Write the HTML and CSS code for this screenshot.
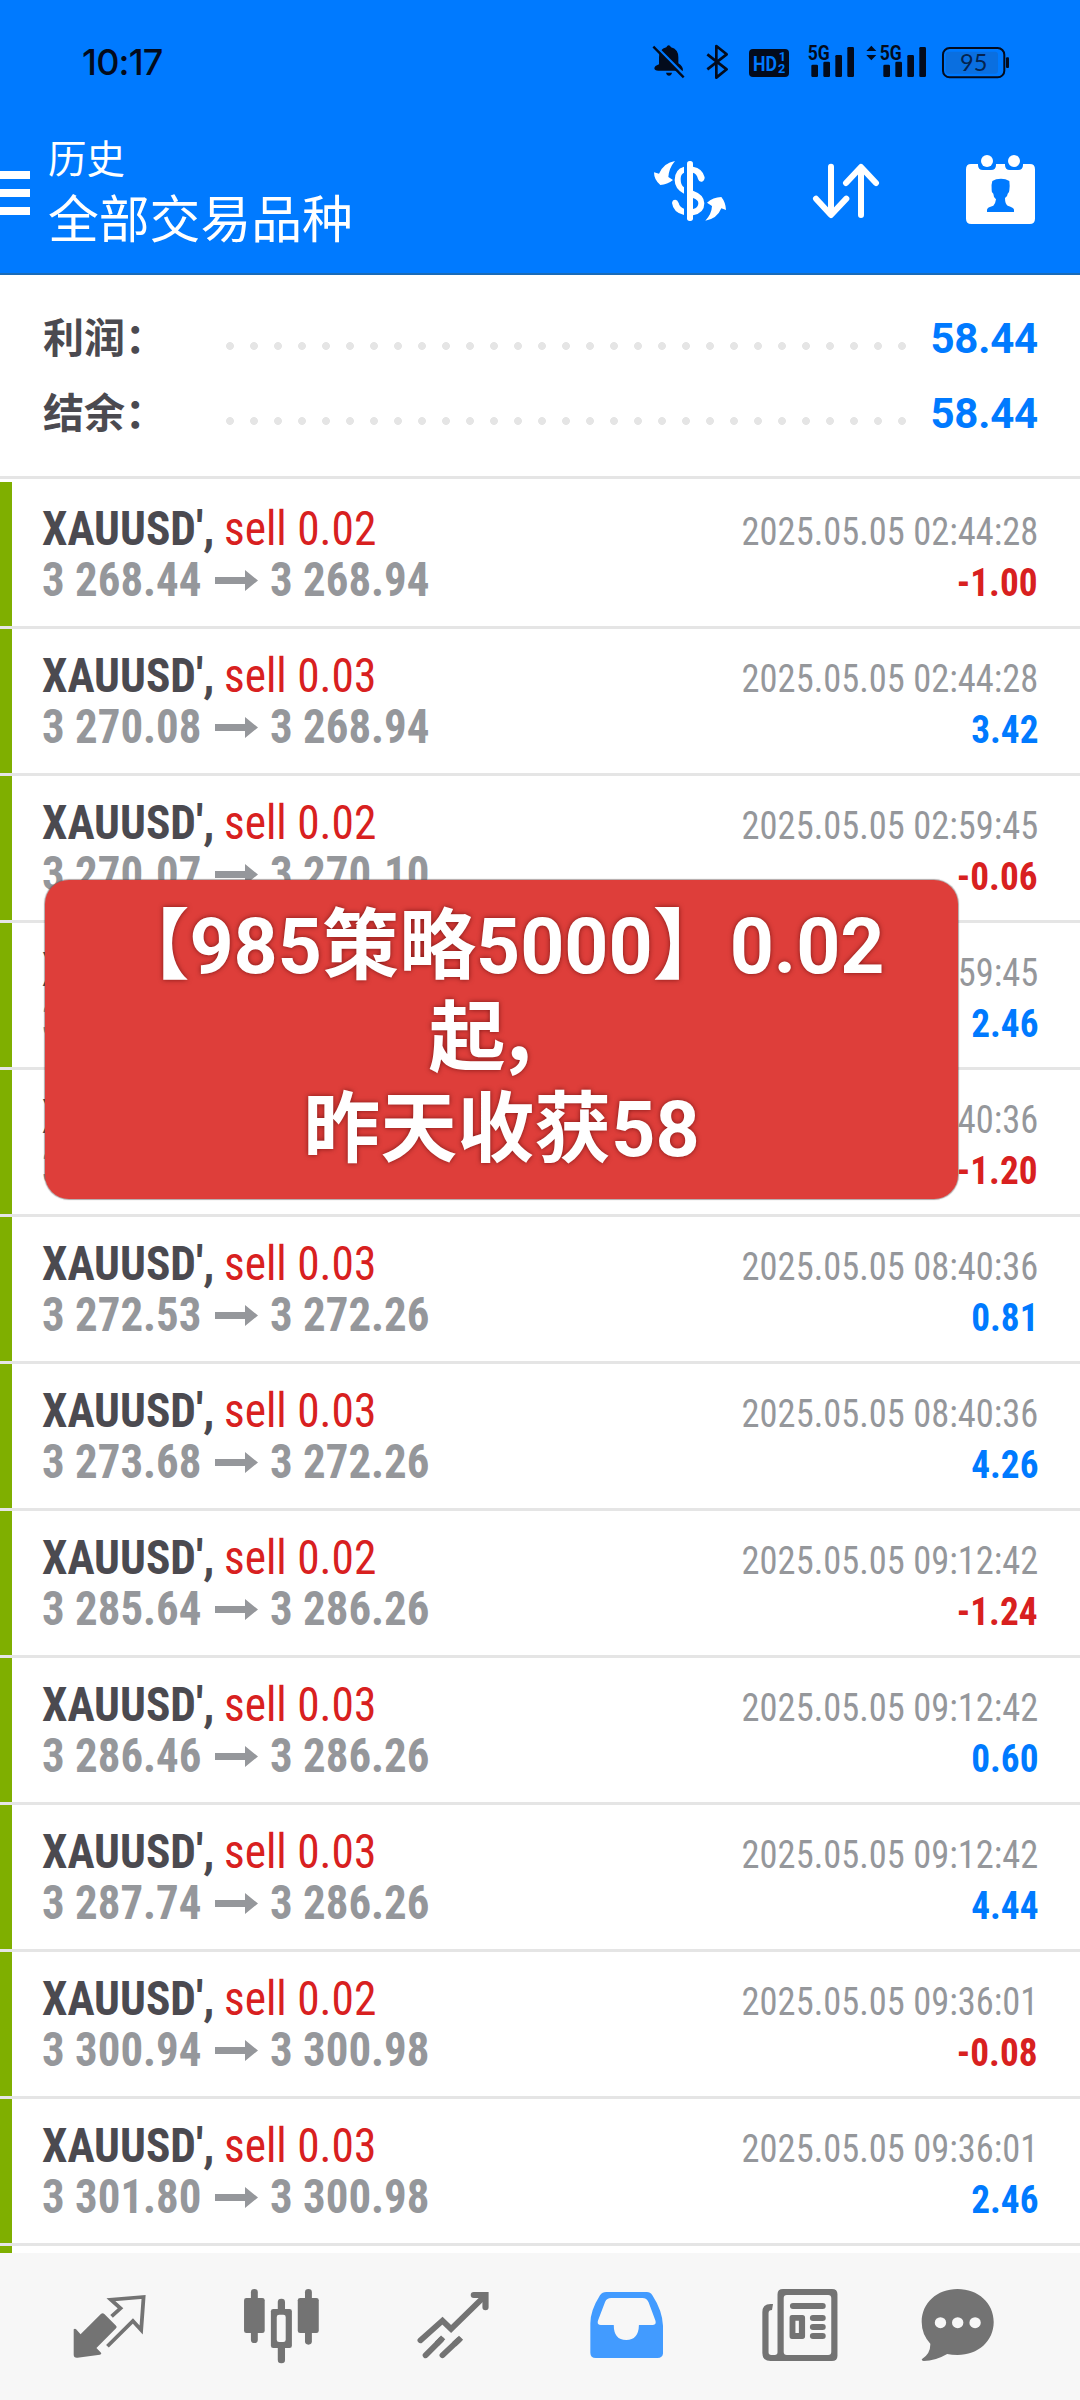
FILE: index.html
```html
<!DOCTYPE html>
<html lang="zh-CN">
<head>
<meta charset="utf-8">
<title>历史</title>
<link rel="stylesheet" href="styles.css">
</head>
<body>
<div class="screen">
  <header class="header">
    <div class="status">
      <span class="clock">10:17</span>
      <svg class="status-icons" viewBox="90 60 1090 130" fill="#030b1c">
        <path d="M115 152q-12 0-12-7 0-7 14-12V112q0-24 22-30 3-6 7-6t7 6q22 6 22 30v18q14 8 14 22H115Z"/>
        <path d="M138 158h18q-2 9-9 9t-9-9Z"/>
        <path d="M99 70 198 170" stroke="#007aff" stroke-width="8"/>
        <path d="M100 80 191 172" stroke="#030b1c" stroke-width="7"/>
        <path d="M262 103 320 148 289 173V78L320 103 262 148" fill="none" stroke="#030b1c" stroke-width="8" stroke-linejoin="round"/>
        <rect x="387" y="87" width="120" height="84" rx="12"/>
        <text class="hd" x="399" y="152" textLength="72" lengthAdjust="spacingAndGlyphs">HD</text>
        <text class="hd-num" x="476" y="124">1</text>
        <text class="hd-num" x="474" y="160">2</text>
        <text class="net" x="563" y="119" textLength="66" lengthAdjust="spacingAndGlyphs">5G</text>
        <rect x="574" y="134" width="20" height="37" rx="4"/>
        <rect x="610" y="125" width="20" height="46" rx="4"/>
        <rect x="646" y="105" width="20" height="66" rx="4"/>
        <rect x="682" y="81" width="20" height="90" rx="4"/>
        <path d="M739 93 754 77 769 93ZM739 105h30L754 121Z"/>
        <text class="net" x="779" y="119" textLength="66" lengthAdjust="spacingAndGlyphs">5G</text>
        <rect x="790" y="134" width="20" height="37" rx="4"/>
        <rect x="826" y="125" width="20" height="46" rx="4"/>
        <rect x="862" y="105" width="20" height="66" rx="4"/>
        <rect x="898" y="81" width="20" height="90" rx="4"/>
        <rect x="977" y="95" width="157" height="66" rx="9" fill="#0a6fe0"/>
        <rect x="969" y="84" width="184" height="88" rx="20" fill="none" stroke="#030b1c" stroke-width="6"/>
        <rect x="1158" y="112" width="9" height="32" rx="3"/>
        <text class="battery" x="1020" y="153" textLength="82" lengthAdjust="spacingAndGlyphs">95</text>
      </svg>
    </div>
    <div class="toolbar">
      <div class="menu"><i></i><i></i><i></i></div>
      <div class="titles">
        <div class="title">历史</div>
        <div class="subtitle">全部交易品种</div>
      </div>
      <svg class="tool tool-currency" viewBox="99 72 222 216" fill="#fff">
        <path d="M165 93Q132 98 117 131L102 127Q102 150 121 165 142 164 159 150L145 141Q147 114 165 93Z"/>
        <path d="M256 272Q275 252 276 228L261 218Q279 202 304 201 317 217 318 240L304 235Q291 267 256 272Z"/>
        <rect x="201" y="93" width="18" height="180" rx="8"/>
        <path d="M192 110v18q-10 4-10 19 0 19 10 25v19q-28-14-28-41 0-32 28-40Z"/>
        <path d="M219 110Q248 115 254 142 254 152 246 155 237 157 234 147 230 130 219 128Z"/>
        <path d="M219 182Q253 194 253 220 253 250 219 256V237Q235 234 235 220 235 209 219 204Z"/>
        <path d="M192 255Q160 248 156 219 157 209 166 209 172 209 176 219 179 232 192 236Z"/>
      </svg>
      <svg class="tool tool-sort" viewBox="576 72 204 216" fill="none" stroke="#fff" stroke-width="18" stroke-linecap="round" stroke-linejoin="round">
        <path d="M633 110V254M588 206 633 255 679 206M723 255V112M678 159 723 111 768 159"/>
      </svg>
      <svg class="tool tool-calendar" viewBox="1035 72 213 216" fill="#fff">
        <path d="M1053 102h21v3q0 15 15 15h24q15 0 15-15v-3h27v3q0 15 15 15h24q15 0 15-15v-3h21q15 0 15 16V266q0 16-16 16H1054q-16 0-16-16V118q0-16 15-16Z"/>
        <circle cx="1101" cy="93" r="18"/><circle cx="1182" cy="93" r="18"/>
        <path fill="#007aff" d="M1117 153q10-7 26-7 14 0 25 7 2 14 0 28 0 8-5 10 0 8-8 13 0 18 8 23 19 6 19 12v7h-81v-7q0-7 19-12 7-8 8-19-8-7-8-17-6-3-5-11-2-15 2-27Z"/>
      </svg>
    </div>
  </header>

  <section class="summary">
    <div class="sum-row"><span class="sum-label">利润：</span><span class="dots"></span><span class="sum-value">58.44</span></div>
    <div class="sum-row"><span class="sum-label">结余：</span><span class="dots"></span><span class="sum-value">58.44</span></div>
  </section>

  <main class="deals">
    <article class="deal"><div class="line"><span class="symbol">XAUUSD',</span><span class="side">sell 0.02</span><time>2025.05.05 02:44:28</time></div><div class="line"><span class="price">3 268.44</span><i class="arrow"></i><span class="price">3 268.94</span><b class="pl loss">-1.00</b></div></article>
    <article class="deal"><div class="line"><span class="symbol">XAUUSD',</span><span class="side">sell 0.03</span><time>2025.05.05 02:44:28</time></div><div class="line"><span class="price">3 270.08</span><i class="arrow"></i><span class="price">3 268.94</span><b class="pl">3.42</b></div></article>
    <article class="deal"><div class="line"><span class="symbol">XAUUSD',</span><span class="side">sell 0.02</span><time>2025.05.05 02:59:45</time></div><div class="line"><span class="price">3 270.07</span><i class="arrow"></i><span class="price">3 270.10</span><b class="pl loss">-0.06</b></div></article>
    <article class="deal"><div class="line"><span class="symbol">XAUUSD',</span><span class="side">sell 0.03</span><time>2025.05.05 02:59:45</time></div><div class="line"><span class="price">3 270.92</span><i class="arrow"></i><span class="price">3 270.10</span><b class="pl">2.46</b></div></article>
    <article class="deal"><div class="line"><span class="symbol">XAUUSD',</span><span class="side">sell 0.02</span><time>2025.05.05 08:40:36</time></div><div class="line"><span class="price">3 271.66</span><i class="arrow"></i><span class="price">3 272.26</span><b class="pl loss">-1.20</b></div></article>
    <article class="deal"><div class="line"><span class="symbol">XAUUSD',</span><span class="side">sell 0.03</span><time>2025.05.05 08:40:36</time></div><div class="line"><span class="price">3 272.53</span><i class="arrow"></i><span class="price">3 272.26</span><b class="pl">0.81</b></div></article>
    <article class="deal"><div class="line"><span class="symbol">XAUUSD',</span><span class="side">sell 0.03</span><time>2025.05.05 08:40:36</time></div><div class="line"><span class="price">3 273.68</span><i class="arrow"></i><span class="price">3 272.26</span><b class="pl">4.26</b></div></article>
    <article class="deal"><div class="line"><span class="symbol">XAUUSD',</span><span class="side">sell 0.02</span><time>2025.05.05 09:12:42</time></div><div class="line"><span class="price">3 285.64</span><i class="arrow"></i><span class="price">3 286.26</span><b class="pl loss">-1.24</b></div></article>
    <article class="deal"><div class="line"><span class="symbol">XAUUSD',</span><span class="side">sell 0.03</span><time>2025.05.05 09:12:42</time></div><div class="line"><span class="price">3 286.46</span><i class="arrow"></i><span class="price">3 286.26</span><b class="pl">0.60</b></div></article>
    <article class="deal"><div class="line"><span class="symbol">XAUUSD',</span><span class="side">sell 0.03</span><time>2025.05.05 09:12:42</time></div><div class="line"><span class="price">3 287.74</span><i class="arrow"></i><span class="price">3 286.26</span><b class="pl">4.44</b></div></article>
    <article class="deal"><div class="line"><span class="symbol">XAUUSD',</span><span class="side">sell 0.02</span><time>2025.05.05 09:36:01</time></div><div class="line"><span class="price">3 300.94</span><i class="arrow"></i><span class="price">3 300.98</span><b class="pl loss">-0.08</b></div></article>
    <article class="deal"><div class="line"><span class="symbol">XAUUSD',</span><span class="side">sell 0.03</span><time>2025.05.05 09:36:01</time></div><div class="line"><span class="price">3 301.80</span><i class="arrow"></i><span class="price">3 300.98</span><b class="pl">2.46</b></div></article>
    <article class="deal deal-next"></article>
  </main>

  <nav class="tabs">
    <svg class="tab tab-quotes" viewBox="213 204 214 228" preserveAspectRatio="none" fill="#737373">
      <path d="M215 328q4-3 7 0l13 15 59-61q5-5 10 0l34 35q4 4 0 8l-57 59 12 13q5 5-2 7l-65 9q-11 1-11-9Z"/>
      <path fill="none" stroke="#737373" stroke-width="11" d="M325 289 351 265 323 239 418 231 411 330 387 303 313 379" stroke-linejoin="miter"/>
    </svg>
    <svg class="tab tab-chart" viewBox="706 204 223 228" preserveAspectRatio="none" fill="#737373">
      <rect x="729" y="207" width="20" height="162" rx="10"/><rect x="709" y="234" width="60" height="105" rx="7"/>
      <rect x="886" y="207" width="20" height="167" rx="10"/><rect x="865" y="234" width="61" height="105" rx="7"/>
      <rect x="807" y="236" width="21" height="50" rx="10"/><rect x="807" y="370" width="21" height="60" rx="10"/>
      <rect x="787" y="267" width="61" height="117" rx="7"/><rect x="804" y="284" width="26" height="82" rx="7" fill="#f7f7f7"/>
    </svg>
    <svg class="tab tab-trade" viewBox="1212 204 210 228" preserveAspectRatio="none" fill="none" stroke="#737373" stroke-width="17">
      <path stroke-linecap="round" d="M1222 361 1286 302 1311 327 1409 228"/>
      <path stroke-linecap="round" d="M1377 225h34v37" stroke-width="18"/>
      <path stroke-linecap="round" d="M1237 406 1282 359M1286 406 1333 360"/>
      <path d="M1270 371 1288 352M1320 373 1340 353"/>
    </svg>
    <svg class="tab tab-history" viewBox="145 204 213 228" preserveAspectRatio="none" fill="#429bff">
      <path fill-rule="evenodd" d="M192 216H310q10 0 16 10 31 49 31 98v74q0 16-16 16H162q-16 0-16-16V310q0-38 28-84 7-10 18-10ZM206 234q-12 0-17 11l-21 57q-3 13 8 13h38q0 45 36 45t37-45h40q11 0 8-13l-20-55q-5-13-18-13Z"/>
    </svg>
    <svg class="tab tab-news" viewBox="645 204 222 228" preserveAspectRatio="none" fill="#737373">
      <path fill-rule="evenodd" d="M706 207H848q16 0 16 16V407q0 16-16 16H670q-24 0-24-24V276q0-24 24-24h7l-3 18q-10 0-10 10V397q0 8 8 8h10q8 0 8-8V223q0-16 16-16ZM717 225q-9 0-9 9V396q0 9 9 9H837q9 0 9-9V234q0-9-9-9Z"/>
      <rect x="726" y="249" width="104" height="18" rx="9"/>
      <path fill-rule="evenodd" d="M732 285h30q8 0 8 8v56q0 8-8 8h-30q-7 0-7-8v-56q0-8 7-8ZM742 302v37h10v-37Z"/>
      <rect x="784" y="285" width="46" height="18" rx="9"/><rect x="784" y="312" width="46" height="18" rx="9"/><rect x="784" y="339" width="46" height="18" rx="9"/>
    </svg>
    <svg class="tab tab-chat" viewBox="1107 204 213 228" preserveAspectRatio="none" fill="#737373">
      <path d="M1213 207c60 0 105 42 105 99s-45 99-105 99q-17 0-30-3-35 21-68 21-9-2-4-7 24-16 23-45-25-28-25-65c0-57 44-99 104-99Z"/>
      <g fill="#f7f7f7"><circle cx="1163.500" cy="308" r="16.500"/><circle cx="1213.500" cy="308" r="16.500"/><circle cx="1264" cy="308" r="16.500"/></g>
    </svg>
  </nav>

  <div class="banner">
    <div class="banner-head">【985策略5000】0.02</div>
    <div><span class="tight">起</span>，</div>
    <div>昨天收获58</div>
  </div>
</div>
</body>
</html>
```
FILE: styles.css
```css
* { box-sizing: border-box; }
body { margin: 0; background: #fff; font-family: Roboto, "Noto Sans CJK SC", sans-serif; }
.screen { position: relative; width: 1080px; height: 2400px; overflow: hidden; display: flex; flex-direction: column; }

.header { height: 275px; background: #007aff; border-bottom: 2px solid #1a6bb8; }
.status { height: 125px; padding: 40px 0 0 82px; display: flex; }
.clock { width: 568px; font: 450 36px/44px Inter, sans-serif; letter-spacing: -0.800px; color: #030b1c; }
.status-icons { width: 363.330px; height: 43.330px; }
.hd { font: 700 60px Roboto, sans-serif; fill: #007aff; }
.hd-num { font: 700 38px Roboto, sans-serif; fill: #007aff; }
.net { font: 700 58px Roboto, sans-serif; }
.battery { font: 400 70px Lato, sans-serif; fill: #04234f; }

.toolbar { display: flex; height: 148px; }
.menu { width: 30px; padding-top: 46px; display: flex; flex-direction: column; gap: 10px; }
.menu i { height: 8px; background: #fff; }
.titles { width: 623px; padding: 3px 0 0 18px; color: #fff; }
.title { font: 400 38.500px/56px "Noto Sans CJK SC", sans-serif; }
.subtitle { font: 400 50.800px/65px "Noto Sans CJK SC", sans-serif; }
.tool { height: 72px; margin-top: 29px; }
.tool-currency { width: 74px; }
.tool-sort { width: 68px; margin-left: 85px; }
.tool-calendar { width: 71px; margin-left: 85px; }

.summary { height: 204px; padding: 23px 42px 0 43px; border-bottom: 3px solid #e5e5e5; }
.sum-row { display: flex; height: 75px; align-items: baseline; line-height: 75px; }
.sum-label { width: 175px; font: 700 41px/75px "Noto Sans CJK SC", sans-serif; color: #4b4a50; }
.dots { width: 696px; height: 8px; align-self: flex-start; margin-top: 44px; background: radial-gradient(circle, #e5e5e5 3.600px, transparent 4.200px) 0 0 / 24px 8px; }
.sum-value { margin-left: auto; font-size: 42px; font-weight: 700; letter-spacing: -0.200px; color: #007aff; }

.deals { flex: 1; min-height: 0; overflow: hidden; padding-top: 3px; font-stretch: 75%; font-family: "Roboto Condensed", Roboto, sans-serif; }
.deal { height: 147px; padding: 21px 42px 0 30px; border-left: 12px solid #7faf00; position: relative; }
.deal::after { content: ""; position: absolute; left: -12px; right: 0; bottom: 0; height: 3px; background: #e5e5e5; }
.line { display: flex; height: 51px; align-items: baseline; line-height: 51px; font-size: 48px; white-space: nowrap; }
.symbol, .side { transform: scaleX(.945); transform-origin: 0 0; }
.symbol { width: 182px; font-weight: 700; color: #4b4a50; }
.side { color: #d82020; }
.price { width: 161px; font-weight: 700; color: #95979b; transform: scaleX(.935); transform-origin: 0 0; }
time, .pl { margin-left: auto; font-size: 39px; transform-origin: 100% 0; }
time { color: #95979b; transform: scaleX(.935); }
.pl { font-weight: 700; color: #007aff; transform: scaleX(.955); }
.loss { color: #d82020; }
.arrow { width: 43px; height: 21px; margin: 16px 12px 0; align-self: flex-start; background: #95979b; clip-path: polygon(0 7px, 30px 7px, 30px 0, 43px 10.500px, 30px 21px, 30px 14px, 0 14px); }

.tabs { height: 147px; background: #f7f7f7; padding-top: 35px; display: flex; }
.tab { height: 76px; flex: none; }
.tab-quotes { width: 73.700px; margin-left: 73.300px; }
.tab-chart { width: 76.800px; margin-left: 96.100px; }
.tab-trade { width: 72.300px; margin-left: 97.500px; }
.tab-history { width: 73.400px; margin-left: 100.200px; }
.tab-news { width: 76.500px; margin-left: 98.800px; }
.tab-chat { width: 73.400px; margin-left: 82.600px; }

.banner { position: absolute; left: 45px; top: 880px; width: 913px; height: 319px; padding-top: 22px; border-radius: 24px; background: #de3e3a; box-shadow: 0 0 1px 1px rgba(80, 60, 60, .45); color: #fff; text-align: center; font: 700 77px/91.500px Roboto, "Noto Sans CJK SC", sans-serif; text-shadow: 0 0 5px rgba(70, 0, 0, .65); white-space: nowrap; }
.banner-head { padding-right: 6px; }
.tight { margin: 0 -8px 0 -8px; padding-left: 8px; }
```
